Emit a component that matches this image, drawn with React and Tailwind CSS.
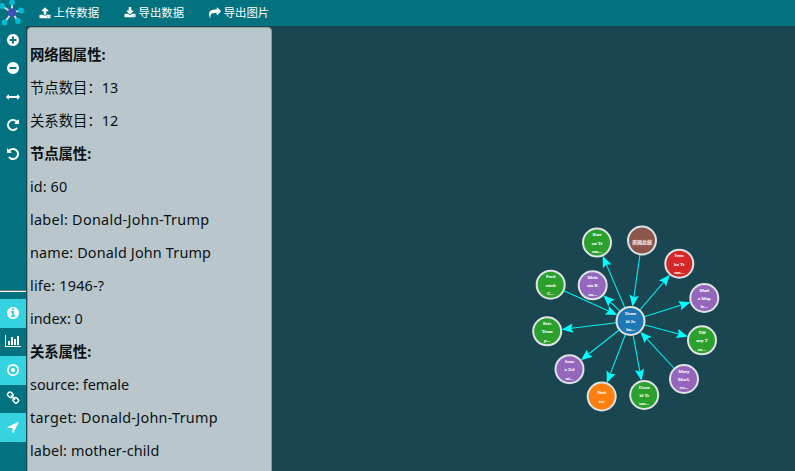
import React from "react";

const DISC =
  "m320-64q0 209-103 385.5t-279.5 279.5-385.5 103-385.5-103-279.5-279.5-103-385.5 103-385.5 279.5-279.5 385.5-103 385.5 103 279.5 279.5 103 385.5z";

const ICONS = {
  upload:
    "M1344 1472q0-26-19-45t-45-19-45 19-19 45 19 45 45 19 45-19 19-45zm256 0q0-26-19-45t-45-19-45 19-19 45 19 45 45 19 45-19 19-45zm128-224v320q0 40-28 68t-68 28h-1472q-40 0-68-28t-28-68v-320q0-40 28-68t68-28h427q21 56 70.5 92t110.5 36h256q61 0 110.5-36t70.5-92h427q40 0 68 28t28 68zm-325-648q-17 40-59 40h-256v448q0 26-19 45t-45 19h-256q-26 0-45-19t-19-45v-448h-256q-42 0-59-40-17-39 14-69l448-448q18-19 45-19t45 19l448 448q31 30 14 69z",
  download:
    "M1344 1344q0-26-19-45t-45-19-45 19-19 45 19 45 45 19 45-19 19-45zm256 0q0-26-19-45t-45-19-45 19-19 45 19 45 45 19 45-19 19-45zm128-224v320q0 40-28 68t-68 28h-1472q-40 0-68-28t-28-68v-320q0-40 28-68t68-28h465l135 136q58 56 136 56t136-56l136-136h464q40 0 68 28t28 68zm-325-569q17 41-14 70l-448 448q-18 19-45 19t-45-19l-448-448q-31-29-14-70 17-39 59-39h256v-448q0-26 19-45t45-19h256q26 0 45 19t19 45v448h256q42 0 59 39z",
  share:
    "M1792 640q0 26-19 45l-512 512q-19 19-45 19t-45-19-19-45v-256h-224q-98 0-175.5 6t-154 21.5-133 42.5-105.5 69.5-80 101-48.5 138.5-17.5 181q0 55 5 123 0 6 2.5 23.5t2.5 26.5q0 15-8.5 25t-23.5 10q-16 0-28-17-7-9-13-22t-13.5-30-10.5-24q-127-285-127-451 0-199 53-333 162-403 875-403h224v-256q0-26 19-45t45-19 45 19l512 512q19 19 19 45z",
  plus:
    "M1344 960v-128q0-26-19-45t-45-19h-256v-256q0-26-19-45t-45-19h-128q-26 0-45 19t-19 45v256h-256q-26 0-45 19t-19 45v128q0 26 19 45t45 19h256v256q0 26 19 45t45 19h128q26 0 45-19t19-45v-256h256q26 0 45-19t19-45z" + DISC,
  minus:
    "M1344 960v-128q0-26-19-45t-45-19h-768q-26 0-45 19t-19 45v128q0 26 19 45t45 19h768q26 0 45-19t19-45z" + DISC,
  arrows:
    "M1792 896q0 26-19 45l-256 256q-19 19-45 19t-45-19-19-45v-128h-1024v128q0 26-19 45t-45 19-45-19l-256-256q-19-19-19-45t19-45l256-256q19-19 45-19t45 19 19 45v128h1024v-128q0-26 19-45t45-19 45 19l256 256q19 19 19 45z",
  repeat:
    "M1664 256v448q0 26-19 45t-45 19h-448q-42 0-59-40-17-39 14-69l138-138q-148-137-349-137-104 0-198.5 40.5t-163.5 109.5-109.5 163.5-40.5 198.5 40.5 198.5 109.5 163.5 163.5 109.5 198.5 40.5q119 0 225-52t179-147q7-10 23-12 15 0 25 9l137 138q9 8 9.5 20.5t-7.5 22.5q-109 132-264 204.5t-327 72.5q-156 0-298-61t-245-164-164-245-61-298 61-298 164-245 245-164 298-61q147 0 284.5 55.5t244.5 156.5l130-129q29-31 70-14 39 17 39 59z",
  info:
    "M1152 1376v-160q0-14-9-23t-23-9h-96v-512q0-14-9-23t-23-9h-320q-14 0-23 9t-9 23v160q0 14 9 23t23 9h96v320h-96q-14 0-23 9t-9 23v160q0 14 9 23t23 9h448q14 0 23-9t9-23zm-128-896v-160q0-14-9-23t-23-9h-192q-14 0-23 9t-9 23v160q0 14 9 23t23 9h192q14 0 23-9t9-23zm640 416q0 209-103 385.5t-279.5 279.5-385.5 103-385.5-103-279.5-279.5-103-385.5 103-385.5 279.5-279.5 385.5-103 385.5 103 279.5 279.5 103 385.5z",
  chart:
    "M640 896v512h-256v-512h256zm384-512v1024h-256v-1024h256zm1024 1152v128h-2048v-1536h128v1408h1920zm-640-896v768h-256v-768h256zm384-384v1152h-256v-1152h256z",
  target:
    "M1152 896q0 106-75 181t-181 75-181-75-75-181 75-181 181-75 181 75 75 181zm-256-544q-148 0-273 73t-198 198-73 273 73 273 198 198 273 73 273-73 198-198 73-273-73-273-198-198-273-73zm768 544q0 209-103 385.5t-279.5 279.5-385.5 103-385.5-103-279.5-279.5-103-385.5 103-385.5 279.5-279.5 385.5-103 385.5 103 279.5 279.5 103 385.5z",
  link:
    "M1520 1216q0-40-28-68l-208-208q-28-28-68-28-42 0-72 32 3 3 19 18.5t21.5 21.5 15 19 13 25.5 3.5 27.5q0 40-28 68t-68 28q-15 0-27.5-3.5t-25.5-13-19-15-21.5-21.5-18.5-19q-33 31-33 73 0 40 28 68l206 207q27 27 68 27 40 0 68-26l147-146q28-28 28-67zm-703-705q0-40-28-68l-206-207q-28-28-68-28-39 0-68 27l-147 146q-28 28-28 67 0 40 28 68l208 208q27 27 68 27 42 0 72-31-3-3-19-18.5t-21.5-21.5-15-19-13-25.5-3.5-27.5q0-40 28-68t68-28q15 0 27.5 3.5t25.5 13 19 15 21.5 21.5 18.5 19q33-31 33-73zm895 705q0 120-85 203l-147 146q-83 83-203 83-121 0-204-85l-206-207q-83-83-83-203 0-123 88-209l-88-88q-86 88-208 88-120 0-204-84l-208-208q-84-84-84-204t85-203l147-146q83-83 203-83 121 0 204 85l206 207q83 83 83 203 0 123-88 209l88 88q86-88 208-88 120 0 204 84l208 208q84 84 84 204z",
  locate:
    "M1593 349l-640 1280q-17 35-57 35-5 0-15-2-22-5-35.5-22.5t-13.5-39.5v-576h-576q-22 0-39.5-13.5t-22.5-35.5 4-42 29-30l1280-640q13-7 29-7 27 0 45 19 15 14 18.5 34.5t-6.5 39.5z",
};

function Icon({ name, className = "size-3.5", wide = false }) {
  return (
    <svg viewBox={wide ? "0 0 2048 1792" : "0 0 1792 1792"} className={"shrink-0 fill-white " + className}>
      <path d={ICONS[name]} />
    </svg>
  );
}

function Logo() {
  const tips = [[12, 2.5], [21, 10.5], [18, 21], [4.5, 22.5], [2, 6]];
  return (
    <svg viewBox="0 0 26 26" className="size-[26px] shrink-0">
      {tips.map(([x, y]) => (
        <line key={x} x1="12" y1="12.5" x2={x} y2={y} stroke="#cfd8dc" strokeWidth="2" />
      ))}
      {tips.map(([x, y]) => (
        <circle key={x} cx={x} cy={y} r="2.9" fill="#00bcd4" />
      ))}
      <circle cx="12" cy="12.5" r="4.3" fill="#3f51b5" />
    </svg>
  );
}

const MENU = [
  { icon: "upload", text: "上传数据" },
  { icon: "download", text: "导出数据" },
  { icon: "share", text: "导出图片" },
];

const BOLD = "font-bold tracking-[-0.1px]";
const ROWS = [
  ["网络图属性:", BOLD],
  ["节点数目：13", "tracking-[-0.05px]"],
  ["关系数目：12", "tracking-[-0.05px]"],
  ["节点属性:", BOLD],
  ["id: 60", "tracking-[0.1px]"],
  ["label: Donald-John-Trump", "tracking-[0.29px]"],
  ["name: Donald John Trump", "tracking-[0.17px]"],
  ["life: 1946-?", "tracking-[0.2px]"],
  ["index: 0", "tracking-normal"],
  ["关系属性:", BOLD],
  ["source: female", "tracking-normal"],
  ["target: Donald-John-Trump", "tracking-[0.27px]"],
  ["label: mother-child", "tracking-[0.12px]"],
];

const GREEN = "#2ca02c";
const PURPLE = "#9467bd";
const HUB = { x: 630.5, y: 321, fill: "#1f77b4", lines: ["Dona", "ld Jo", "hn..."] };
const NODES = [
  { x: 597, y: 242.5, fill: GREEN, lines: ["Barr", "on Tr", "um..."] },
  { x: 642, y: 240.5, fill: "#8c564b", lines: ["美国总统"], inward: true },
  { x: 679.3, y: 263.7, fill: "#d62728", lines: ["Ivan", "ka Tr", "um..."] },
  { x: 704.3, y: 298, fill: PURPLE, lines: ["Marl", "a Map", "le..."] },
  { x: 702, y: 340.3, fill: GREEN, lines: ["Tiff", "any T", "ru..."] },
  { x: 684, y: 379, fill: PURPLE, lines: ["Mary", "MacL", "eo..."], inward: true },
  { x: 644.2, y: 395, fill: GREEN, lines: ["Dona", "ld Tr", "um..."] },
  { x: 601.7, y: 396.5, fill: "#ff7f0e", lines: ["Twit", "ter"] },
  { x: 569.5, y: 369.2, fill: PURPLE, lines: ["Ivan", "a Zel", "ni..."] },
  { x: 547.2, y: 331.3, fill: GREEN, lines: ["Eric", "Trum", "p..."] },
  { x: 550.7, y: 284.7, fill: GREEN, lines: ["Fred", "erick", "C..."], inward: true },
  { x: 592.7, y: 285.3, fill: PURPLE, lines: ["Mela", "nia K", "na..."] },
];

function Edge({ node }) {
  const [from, to] = node.inward ? [node, HUB] : [HUB, node];
  const dx = to.x - from.x;
  const dy = to.y - from.y;
  const len = Math.hypot(dx, dy);
  const tipX = to.x - (dx / len) * 14.5;
  const tipY = to.y - (dy / len) * 14.5;
  const angle = (Math.atan2(dy, dx) * 180) / Math.PI;
  return (
    <g fill="#00ffff">
      <line x1={from.x} y1={from.y} x2={tipX - (dx / len) * 6} y2={tipY - (dy / len) * 6} stroke="#00ffff" strokeWidth="1.1" strokeOpacity="0.9" />
      <path d="M0 0L-11.5 -4.7L-9.5 0L-11.5 4.7Z" transform={`translate(${tipX} ${tipY}) rotate(${angle})`} />
    </g>
  );
}

function Node({ node }) {
  return (
    <g transform={`translate(${node.x} ${node.y})`}>
      <circle r="14" fill={node.fill} stroke="#dfe3e4" strokeWidth="2" />
      {node.lines.map((line, i) => (
        <text
          key={i}
          y={(node.lines.length === 1 ? 3.3 : node.lines.length === 2 ? -2.4 : -6.4) + i * 8.4}
          textAnchor="middle"
          fill="#fff"
          className="font-['Liberation_Serif','Noto_Sans_CJK_SC',serif] text-[5px]"
          stroke="#fff"
          strokeWidth="0.15"
        >
          {line}
        </text>
      ))}
    </g>
  );
}

function SideItem({ children, active }) {
  return (
    <div className={"flex h-[28.5px] w-full items-center justify-center pr-px " + (active ? "bg-[#35d3e0]" : "")}>{children}</div>
  );
}

export default function App() {
  return (
    <div className="relative flex h-[471px] w-[795px] flex-col overflow-hidden bg-[#1a4651] font-['Noto_Sans','Noto_Sans_CJK_SC',sans-serif]">
      <svg viewBox="0 0 795 471" className="absolute inset-0 h-[471px] w-[795px]">
        {NODES.map((n, i) => <Edge key={i} node={n} />)}
        {[...NODES, HUB].map((n, i) => <Node key={i} node={n} />)}
      </svg>
      <header className="flex h-[26px] shrink-0 items-center bg-[#027180]">
        <Logo />
        <nav className="flex items-center gap-[25px] pl-[13px]">
          {MENU.map((m) => (
            <span key={m.text} className="flex items-center gap-[2.5px] text-[11.4px] leading-[26px] whitespace-nowrap text-white">
              <Icon name={m.icon} className="size-3" />
              {m.text}
            </span>
          ))}
        </nav>
      </header>
      <div className="flex min-h-0 flex-1">
        <aside className="flex w-[26px] shrink-0 flex-col bg-[#027180]">
          <SideItem><Icon name="plus" /></SideItem>
          <SideItem><Icon name="minus" className="mb-px size-3.5" /></SideItem>
          <SideItem><Icon name="arrows" /></SideItem>
          <SideItem><Icon name="repeat" className="mb-px size-3.5" /></SideItem>
          <SideItem><Icon name="repeat" className="size-3.5 -scale-x-100" /></SideItem>
          <div className="mt-auto h-[181px]">
            <div className="mb-[7px] h-0.5 border-t border-b border-t-[#6b7a7d] border-b-white" />
            <SideItem active><Icon name="info" /></SideItem>
            <SideItem><Icon name="chart" wide className="mb-px h-3.5 w-4" /></SideItem>
            <SideItem active><Icon name="target" /></SideItem>
            <SideItem><Icon name="link" className="mb-px size-3.5" /></SideItem>
            <SideItem active><Icon name="locate" /></SideItem>
          </div>
        </aside>
        <section className="mt-px ml-px h-[470px] w-[244.5px] shrink-0 rounded border border-[#8b9da3] bg-[#b9c6cb] pt-[10px] pl-[2px] text-[14.4px] text-[#0b1214]">
          {ROWS.map(([text, style], i) => (
            <p key={i} className={"h-[33px] leading-[33px] whitespace-nowrap " + style}>{text}</p>
          ))}
        </section>
      </div>
    </div>
  );
}
